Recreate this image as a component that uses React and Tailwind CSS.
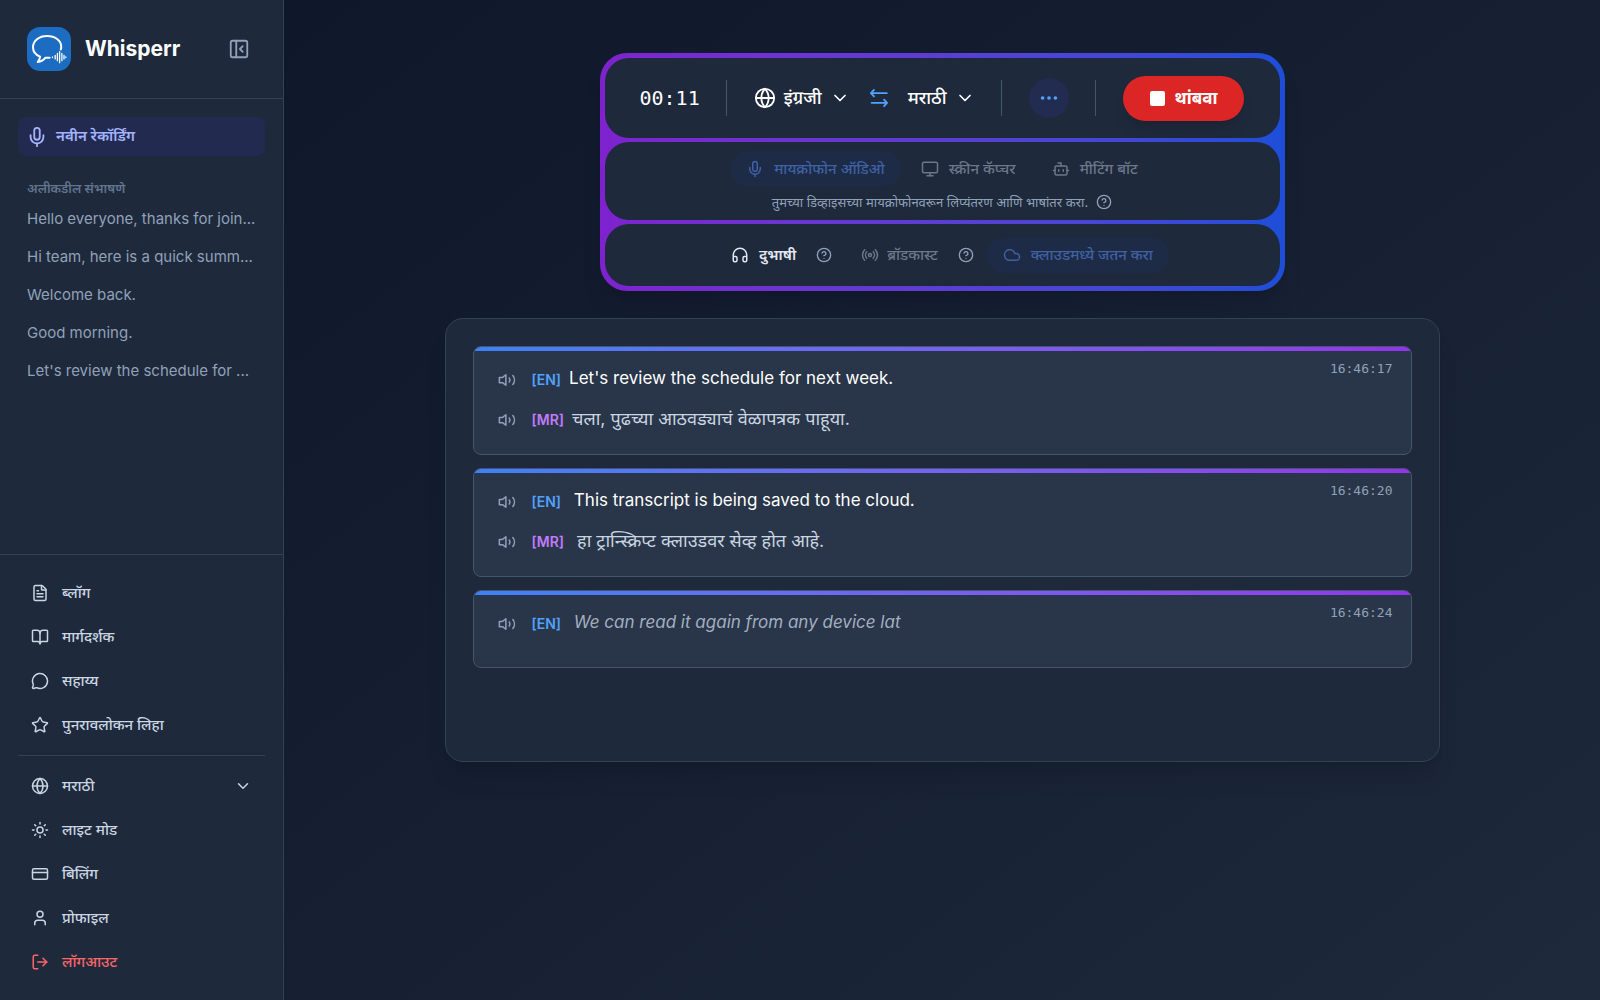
import {
  BookOpen,
  Bot,
  ChevronDown,
  CircleHelp,
  Cloud,
  CreditCard,
  Ellipsis,
  FileText,
  Globe,
  Headphones,
  LogOut,
  MessageCircle,
  Mic,
  Monitor,
  PanelLeftClose,
  Radio,
  Star,
  Sun,
  User,
} from 'lucide-react';

const recents = [
  'Hello everyone, thanks for join...',
  'Hi team, here is a quick summ...',
  'Welcome back.',
  'Good morning.',
  "Let's review the schedule for ...",
];

const links = [
  { label: 'ब्लॉग', icon: FileText },
  { label: 'मार्गदर्शक', icon: BookOpen },
  { label: 'सहाय्य', icon: MessageCircle },
  { label: 'पुनरावलोकन लिहा', icon: Star },
];

const entries = [
  {
    time: '16:46:17',
    lines: [
      { lang: 'EN', text: "Let's review the schedule for next week." },
      { lang: 'MR', text: 'चला, पुढच्या आठवड्याचं वेळापत्रक पाहूया.' },
    ],
  },
  {
    time: '16:46:20',
    lines: [
      { lang: 'EN', text: ' This transcript is being saved to the cloud.' },
      { lang: 'MR', text: ' हा ट्रान्स्क्रिप्ट क्लाउडवर सेव्ह होत आहे.' },
    ],
  },
  {
    time: '16:46:24',
    partial: true,
    lines: [{ lang: 'EN', text: ' We can read it again from any device lat' }],
  },
];

function Logo() {
  return (
    <svg viewBox="0 0 44 44" className="size-11 shrink-0" aria-hidden="true">
      <rect width="44" height="44" rx="13" fill="#1c6dc1" />
      <g fill="none" stroke="#fff" strokeLinecap="round" strokeLinejoin="round">
        <path
          strokeWidth="2"
          d="M33.800 22.500c.3-1 .4-1.900.4-2.900 0-6-6.200-10.600-14.200-10.600S6 13.800 6 20.200c0 4.300 2.800 7.700 7.100 9.500-.2 1.900-1 3.800-2.400 5.300 3.400-.4 6-1.900 7.900-4.300h4"
        />
        <path strokeWidth="1.3" d="M25.500 30v.5M28.200 28.500v3.400M30.400 26.500v7.200M32.600 24.700v11M34.900 26.500v7.200M37 28.500v3.400M38.800 29.900v.6" />
      </g>
    </svg>
  );
}

function SwapIcon() {
  return (
    <svg viewBox="0 0 24 24" className="size-[22px]" fill="none" stroke="currentColor" strokeWidth="2" strokeLinecap="round" strokeLinejoin="round" aria-hidden="true">
      <path d="M6.500 3.200 3.200 6.700l3.300 3.500M3.200 6.700h17.300M17.500 13.800l3.300 3.500-3.300 3.500M20.800 17.300H4" />
    </svg>
  );
}

function SpeakerIcon() {
  return (
    <svg viewBox="0 0 24 24" className="size-[18px]" fill="none" stroke="currentColor" strokeWidth="2" strokeLinecap="round" strokeLinejoin="round" aria-hidden="true">
      <path d="M10.500 5v14L6 15.500H1.800v-7H6z" />
      <path d="M15 9.300a4.500 4.500 0 0 1 0 5.400M19.800 6a9.500 9.500 0 0 1 0 12" />
    </svg>
  );
}

function NavItem({ icon: Icon, label }) {
  return (
    <a href="#" className="flex h-11 items-center gap-[13px] px-[13px] text-[15px] font-medium text-slate-300">
      <Icon className="size-[18px]" />
      {label}
    </a>
  );
}

function HelpButton() {
  return (
    <button type="button" aria-label="मदत" className="text-slate-400">
      <CircleHelp className="size-4" />
    </button>
  );
}

function Sidebar() {
  return (
    <aside className="flex w-[284px] shrink-0 flex-col border-r border-slate-700 bg-[#1e293b]">
      <header className="flex h-[99px] items-center justify-between border-b border-slate-700 pl-[27px] pr-[33px]">
        <div className="flex items-center gap-3.5">
          <Logo />
          <h1 className="text-[21px] font-bold text-white">Whisperr</h1>
        </div>
        <button type="button" aria-label="साइडबार बंद करा" className="text-slate-400">
          <PanelLeftClose className="size-[22px]" />
        </button>
      </header>

      <div className="flex-1 px-[18px] pt-[18px]">
        <button type="button" className="flex h-[39px] w-full items-center gap-2 rounded-lg bg-[#232a50] px-2 text-[15px] font-semibold text-indigo-300">
          <Mic className="size-[22px]" />
          नवीन रेकॉर्डिंग
        </button>
        <h2 className="mt-5 px-[9px] text-[13px] font-semibold leading-6 text-slate-500">अलीकडील संभाषणे</h2>
        <ul>
          {recents.map((title) => (
            <li key={title}>
              <a href="#" className="block whitespace-nowrap px-[9px] text-[15px] leading-[38px] text-slate-400">
                {title}
              </a>
            </li>
          ))}
        </ul>
      </div>

      <nav className="flex flex-col border-t border-slate-700 px-[18px] py-4">
        {links.map((link) => (
          <NavItem key={link.label} {...link} />
        ))}
        <hr className="my-2 border-slate-700" />
        <button type="button" className="flex h-11 items-center gap-[13px] px-[13px] text-[15px] font-medium text-slate-300">
          <Globe className="size-[18px]" />
          मराठी
          <ChevronDown className="ml-auto size-[18px]" />
        </button>
        <NavItem icon={Sun} label="लाइट मोड" />
        <NavItem icon={CreditCard} label="बिलिंग" />
        <NavItem icon={User} label="प्रोफाइल" />
        <a href="#" className="flex h-11 items-center gap-[13px] px-[13px] text-[15px] font-medium text-red-400">
          <LogOut className="size-[18px]" />
          लॉगआउट
        </a>
      </nav>
    </aside>
  );
}

function Controls() {
  return (
    <section className="flex w-full max-w-[685px] flex-col gap-1 rounded-[27px] bg-linear-to-r from-[#7e22ce] to-[#1d4ed8] p-[5px] text-[15px] font-medium shadow-xl">
      <div className="flex h-20 items-center justify-between rounded-3xl bg-[#1e293b] px-[35px] text-lg text-white">
        <time className="font-['DejaVu_Sans_Mono',monospace] text-xl">00:11</time>
        <span className="h-9 w-px bg-slate-600" />
        <div className="flex items-center gap-[18px]">
          <button type="button" className="flex items-center gap-2">
            <Globe className="size-[22px]" />
            इंग्रजी
            <ChevronDown className="size-5" />
          </button>
          <button type="button" aria-label="भाषा बदला" className="text-blue-400">
            <SwapIcon />
          </button>
          <button type="button" className="flex items-center gap-2">
            मराठी
            <ChevronDown className="size-5" />
          </button>
        </div>
        <span className="h-9 w-px bg-slate-600" />
        <button type="button" aria-label="अधिक पर्याय" className="flex size-10 items-center justify-center rounded-full bg-[#212c50] text-blue-400">
          <Ellipsis className="size-[22px]" />
        </button>
        <span className="h-9 w-px bg-slate-600" />
        <button type="button" className="flex h-[45px] items-center gap-2.5 rounded-full bg-[#dc2626] px-[27px] text-[17px] font-bold shadow-lg">
          <span className="size-[15px] rounded-xs bg-white" />
          थांबवा
        </button>
      </div>

      <div className="flex h-[78px] flex-col items-center gap-[3px] rounded-3xl bg-[#1e293b] pt-[9px]">
        <div className="flex items-center gap-1 text-[#6c778a]">
          <button type="button" className="flex h-9 items-center gap-2.5 rounded-full bg-[#1e2b47] px-4 text-[#3f62a3]">
            <Mic className="size-[18px]" />
            मायक्रोफोन ऑडिओ
          </button>
          <button type="button" className="flex h-9 items-center gap-2.5 px-4">
            <Monitor className="size-[18px]" />
            स्क्रीन कॅप्चर
          </button>
          <button type="button" className="flex h-9 items-center gap-2.5 px-4">
            <Bot className="size-[18px]" />
            मीटिंग बॉट
          </button>
        </div>
        <p className="flex items-center gap-2 text-[13px] font-normal leading-6 text-slate-400">
          तुमच्या डिव्हाइसच्या मायक्रोफोनवरून लिप्यंतरण आणि भाषांतर करा.
          <HelpButton />
        </p>
      </div>

      <div className="flex h-[62px] items-center justify-center gap-[13px] rounded-3xl bg-[#1e293b]">
        <div className="flex items-center gap-1">
          <button type="button" className="flex h-9 items-center gap-2.5 px-4 font-semibold text-slate-200">
            <Headphones className="size-[18px]" />
            दुभाषी
          </button>
          <HelpButton />
        </div>
        <div className="flex items-center gap-1">
          <button type="button" className="flex h-9 items-center gap-2 px-4 text-[#6c778a]">
            <Radio className="size-[18px]" />
            ब्रॉडकास्ट
          </button>
          <HelpButton />
        </div>
        <button type="button" className="flex h-9 items-center gap-2.5 rounded-full bg-[#1e2b47] px-4 text-[#3f62a3]">
          <Cloud className="size-[18px]" />
          क्लाउडमध्ये जतन करा
        </button>
      </div>
    </section>
  );
}

function Line({ lang, text, partial }) {
  const isSource = lang === 'EN';
  return (
    <div className="flex h-10 items-center">
      <div className="mr-2 flex items-center gap-4">
        <button type="button" aria-label="ऐका" className="text-slate-400">
          <SpeakerIcon />
        </button>
        <span className={isSource ? 'text-sm font-semibold text-blue-400' : 'text-sm font-semibold text-purple-400'}>
          [{lang}]
        </span>
      </div>
      <p
        className={
          partial
            ? 'whitespace-pre-wrap pb-0.5 text-[17px] italic text-[#a3afc0]'
            : isSource
              ? 'whitespace-pre-wrap pb-0.5 text-[17px] text-white'
              : 'whitespace-pre-wrap pb-0.5 text-lg text-slate-300'
        }
      >
        {text}
      </p>
    </div>
  );
}

function Entry({ time, lines, partial }) {
  return (
    <li className="min-h-[78px] overflow-hidden rounded-lg border border-slate-600 bg-[#293548]">
      <div className="h-1 bg-linear-to-r from-[#3b82f6] to-[#9333ea]" />
      <div className="flex items-start justify-between pb-3.5 pl-6 pr-[18px] pt-[9px]">
        <div>
          {lines.map((line) => (
            <Line key={line.lang} {...line} partial={partial} />
          ))}
        </div>
        <time className="font-['DejaVu_Sans_Mono',monospace] text-[13px] leading-[18px] text-slate-400">{time}</time>
      </div>
    </li>
  );
}

export default function App() {
  return (
    <div className="flex min-h-screen bg-[#0f172a] font-[Inter,'Noto_Sans',sans-serif]">
      <Sidebar />
      <main className="flex flex-1 flex-col items-center gap-[27px] bg-linear-to-br from-[#0f172a] to-[#1e293b] px-8 pt-[53px]">
        <Controls />
        <section className="min-h-[444px] w-full max-w-[995px] rounded-[18px] border border-slate-700 bg-[#1e293b] p-[27px] shadow-xl">
          <ul className="flex flex-col gap-[13px]">
            {entries.map((entry) => (
              <Entry key={entry.time} {...entry} />
            ))}
          </ul>
        </section>
      </main>
    </div>
  );
}
